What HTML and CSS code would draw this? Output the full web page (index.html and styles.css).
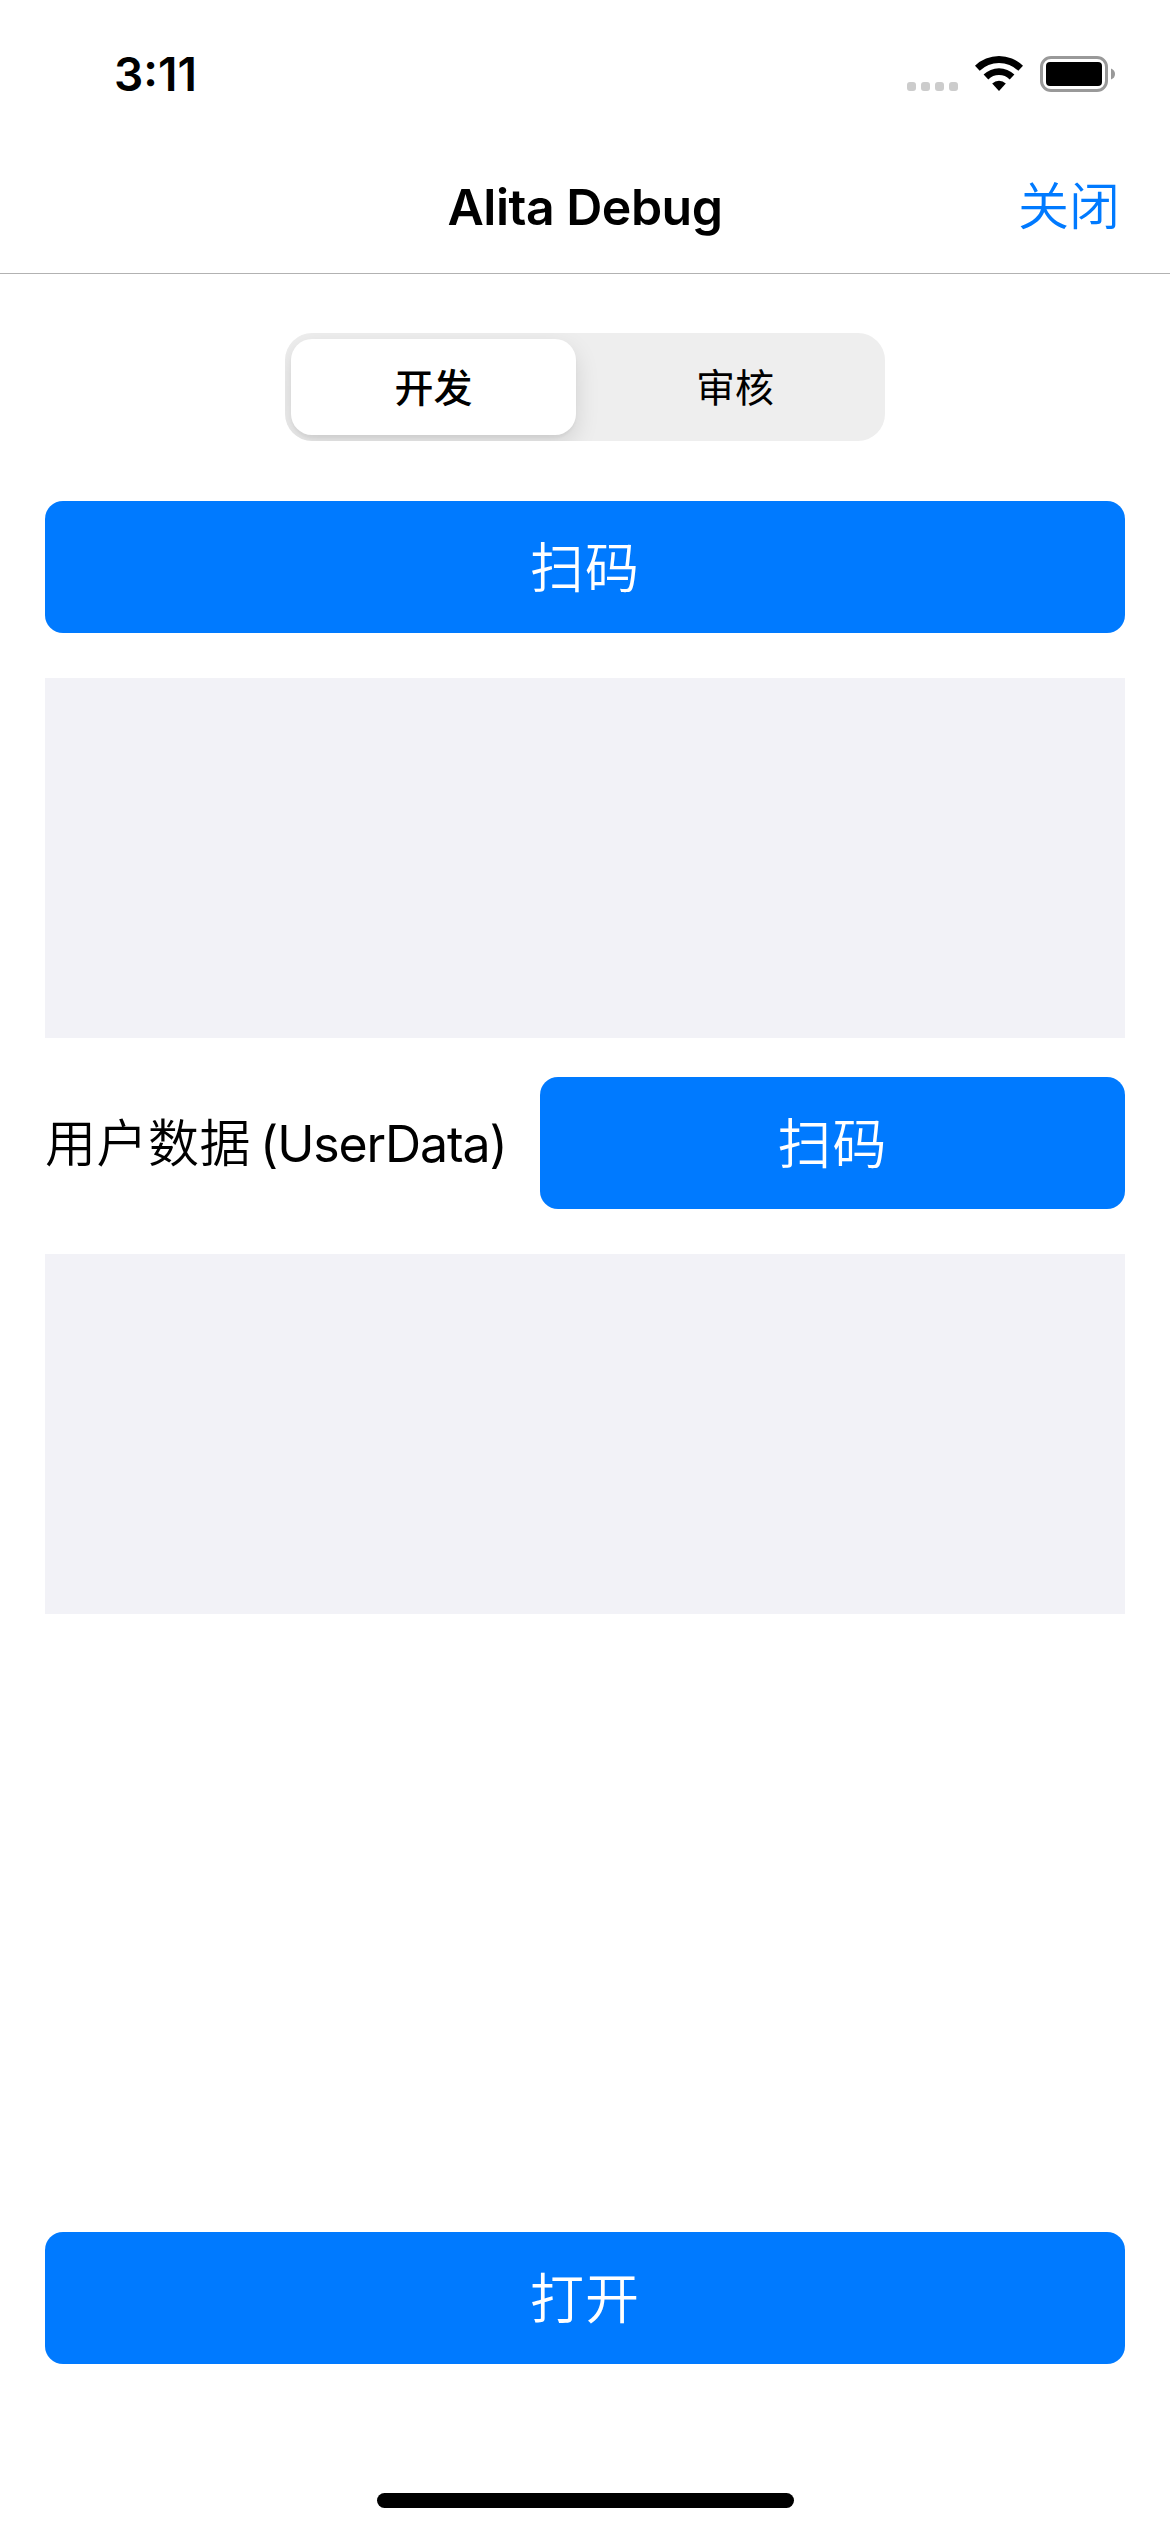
FILE: index.html
```html
<!DOCTYPE html>
<html lang="zh-CN">
<head>
<meta charset="utf-8">
<title>Alita Debug</title>
<link rel="stylesheet" href="styles.css">
</head>
<body>
<div class="screen">
  <div class="status">
    <span class="time">3:11</span>
    <svg class="status-icons" width="210" height="40" viewBox="0 0 210 40">
      <g fill="#ccc">
        <rect x="1" y="28" width="9" height="9" rx="3"/>
        <rect x="15" y="28" width="9" height="9" rx="3"/>
        <rect x="29" y="28" width="9" height="9" rx="3"/>
        <rect x="43" y="28" width="9" height="9" rx="3"/>
      </g>
      <path d="M69 11.8A34.5 34.5 0 0 1 117 11.8L112.3 16.8A27.5 27.5 0 0 0 73.700 16.800Z"/>
      <path d="M77.600 20.600A22 22 0 0 1 108.400 20.600L103.700 25.500A15.200 15.200 0 0 0 82.300 25.500Z"/>
      <path d="M86.200 29.500A9.800 9.800 0 0 1 99.800 29.500L93 37Z"/>
      <rect x="135.500" y="3.500" width="65" height="33" rx="9.500" fill="none" stroke="#999" stroke-width="3"/>
      <rect x="140" y="8" width="56" height="24" rx="4"/>
      <path d="M205 14.500Q209 16 209 20T205 25.500Z" fill="#999"/>
    </svg>
  </div>
  <header class="nav">
    <span></span>
    <h1 class="title">Alita Debug</h1>
    <a class="close">关闭</a>
  </header>
  <main class="content">
    <div class="segmented">
      <div class="segment selected">开发</div>
      <div class="segment">审核</div>
    </div>
    <button class="button">扫码</button>
    <div class="textarea"></div>
    <div class="row">
      <span class="label"><span class="label-cn">用户数据</span><span class="label-en">(UserData)</span></span>
      <button class="button">扫码</button>
    </div>
    <div class="textarea"></div>
    <button class="button open">打开</button>
  </main>
  <div class="home"></div>
</div>
</body>
</html>
```

FILE: styles.css
```css
* { box-sizing: border-box; }

body {
  margin: 0;
  background: #fff;
  color: #000;
  font-family: Inter, "Noto Sans CJK SC", sans-serif;
}

.screen {
  width: 1170px;
  height: 2532px;
  display: flex;
  flex-direction: column;
  overflow: hidden;
}

.status {
  height: 141px;
  padding: 54px 54px 0 114px;
  display: flex;
  align-items: flex-start;
  justify-content: space-between;
}

.time {
  font-size: 46px;
  line-height: 40px;
  font-weight: 600;
}

.nav {
  height: 133px;
  display: grid;
  grid-template-columns: 1fr auto 1fr;
  align-items: center;
  border-bottom: 1px solid #b2b2b2;
  padding-right: 50px;
  padding-left: 50px;
}

.title {
  margin: 0;
  font-size: 50px;
  line-height: 60px;
  font-weight: 600;
  letter-spacing: -0.5px;
}

.close {
  justify-self: end;
  color: #007aff;
  font-size: 51px;
  font-weight: 350;
  line-height: 60px;
}

.content {
  flex: 1;
  display: flex;
  flex-direction: column;
  padding: 59px 45px 0;
}

.segmented {
  align-self: center;
  display: flex;
  gap: 6px;
  width: 600px;
  height: 108px;
  padding: 6px;
  margin-bottom: 60px;
  border-radius: 27px;
  background: #eee;
  overflow: hidden;
}

.segment {
  flex: 1;
  display: flex;
  align-items: center;
  justify-content: center;
  padding: 0 0 4px 9px;
  border-radius: 21px;
  font-size: 39px;
}

.selected {
  flex: 0 0 285px;
  padding-left: 0;
  background: #fff;
  font-weight: 500;
  box-shadow: 0 9px 24px rgba(0, 0, 0, 0.12), 0 3px 3px rgba(0, 0, 0, 0.04);
}

.button {
  flex: none;
  height: 132px;
  padding: 3px 0 0;
  border: 0;
  border-radius: 18px;
  background: #007aff;
  color: #fff;
  font: 350 54px/60px Inter, "Noto Sans CJK SC", sans-serif;
  letter-spacing: 1px;
}

.textarea {
  height: 360px;
  margin-top: 45px;
  background: #f2f2f7;
}

.row {
  display: flex;
  justify-content: space-between;
  align-items: center;
  margin-top: 39px;
}

.row .button { width: 585px; }

.label {
  display: flex;
  align-items: baseline;
  gap: 11px;
  padding-top: 2px;
  font-size: 50px;
  line-height: 60px;
  white-space: nowrap;
}

.label-cn {
  font-size: 51px;
  font-weight: 350;
  letter-spacing: 0.5px;
}

.label-en {
  letter-spacing: -1.1px;
  margin-left: -2px;
}

.open { margin-top: 618px; }

.home {
  align-self: center;
  width: 417px;
  height: 15px;
  margin-bottom: 24px;
  border-radius: 8px;
  background: #000;
}
```
